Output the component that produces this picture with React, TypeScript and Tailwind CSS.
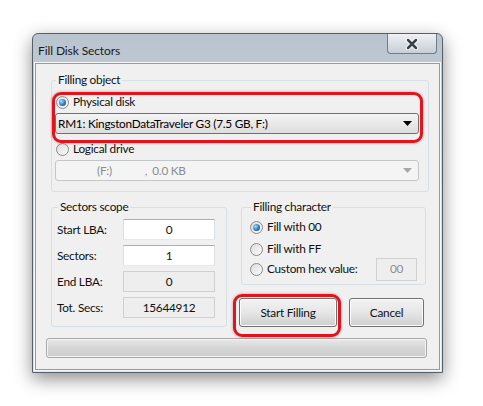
import React from 'react';

function Radio({ checked = false, disabled = false }: { checked?: boolean; disabled?: boolean }) {
  return (
    <span
      className={`flex h-[13px] w-[13px] shrink-0 items-center justify-center rounded-full border ${
        disabled ? 'border-[#b0b0b0]' : 'border-[#8a8a8a]'
      } bg-linear-to-br from-[#dcdcdc] to-[#fbfbfb]`}
    >
      {checked && (
        <span className="h-[7px] w-[7px] rounded-full bg-[radial-gradient(circle_at_35%_35%,#9ddcff,#1f69b5_65%,#164a86)]" />
      )}
    </span>
  );
}

function Combo({ children, disabled = false }: { children: React.ReactNode; disabled?: boolean }) {
  return (
    <div
      className={`flex h-[21px] items-center justify-between rounded-[3px] border pl-[2px] pr-[6px] ${
        disabled
          ? 'border-[#c3c7ca] bg-[#f4f4f4] text-[#8d8d8d]'
          : 'border-[#707070] bg-linear-to-b from-[#f4f4f4] to-[#dedede] text-black'
      }`}
    >
      <span className="flex whitespace-pre">{children}</span>
      <svg width="9" height="5" viewBox="0 0 9 5">
        <path d="M0 0 H9 L4.5 5 Z" fill={disabled ? '#a8a8a8' : '#000'} />
      </svg>
    </div>
  );
}

function Field({ label, value, disabled = false }: { label: string; value: string; disabled?: boolean }) {
  return (
    <div className="flex items-center">
      <span className="w-[66px]">{label}</span>
      <div
        className={`flex h-[21px] w-[92px] items-center justify-center border ${
          disabled ? 'border-[#d0d0d0] bg-[#eeeeee]' : 'border-[#abadb3] border-b-[#e3e9ef] border-x-[#dbdfe6] bg-white'
        }`}
      >
        {value}
      </div>
    </div>
  );
}

function Button({ label }: { label: string }) {
  return (
    <div className="flex h-[29px] items-center justify-center rounded-[3px] border border-[#707070] bg-linear-to-b from-[#f2f2f2] via-[#e6e6e6] to-[#cfcfcf] shadow-[inset_0_0_0_1px_#fcfcfc]">
      {label}
    </div>
  );
}

export default function App() {
  return (
    <div className="h-[406px] w-[483px] bg-white pl-[32px] pt-[33px] font-['Lato',sans-serif] text-[11.8px] leading-[16px] tracking-[-0.25px] text-[#111]">
      <div className="flex h-[340px] w-[411px] flex-col rounded-t-[6px] border border-[#56606b] bg-linear-to-b from-[#b9c4cf] via-[#d3dae2] to-[#dfe5eb] px-[2px] pb-[2px] shadow-[0_6px_18px_rgba(0,0,0,0.45)]">
        {/* Title bar */}
        <div className="flex h-[29px] items-start justify-between">
          <span className="mt-[9px] pl-[3px] text-[12px] tracking-[-0.1px] text-[#1a1a1a]">Fill Disk Sectors</span>
          <div className="mr-[3px] flex h-[20px] w-[50px] items-center justify-center rounded-b-[4px] border border-t-0 border-[#6f7b87] bg-linear-to-b from-[#eef1f4] to-[#c6ced7]">
            <svg width="16" height="12" viewBox="0 0 16 12">
              <path d="M4 2 L12 10 M12 2 L4 10" stroke="#fff" strokeWidth="4.5" strokeLinecap="round" />
              <path d="M4 2 L12 10 M12 2 L4 10" stroke="#38424d" strokeWidth="2.5" strokeLinecap="round" />
            </svg>
          </div>
        </div>

        {/* Client area */}
        <div className="relative flex flex-1 flex-col border border-[#8f9ba7] bg-[#f0f0f0] shadow-[0_0_0_1px_#f6f8fa]">
          <fieldset className="ml-[15px] mr-[10px] mt-[8px] rounded-[3px] border border-[#d5dfe5] px-[3px] pb-[10px]">
            <legend className="ml-[1px] px-[2px]">Filling object</legend>
            <div className="mt-[6px] flex h-[16px] items-center gap-[4px] pl-[1px]">
              <Radio checked />
              <span>Physical disk</span>
            </div>
            <div className="mr-[6px] mt-[3px]">
              <Combo>RM1: KingstonDataTraveler G3 (7.5 GB, F:)</Combo>
            </div>
            <div className="mt-[7px] flex h-[16px] items-center gap-[4px] pl-[1px]">
              <Radio />
              <span>Logical drive</span>
            </div>
            <div className="mr-[6px] mt-[3px]">
              <Combo disabled>
                <span className="ml-[39px]">(F:)</span>
                <span className="ml-[33px]">,</span>
                <span className="ml-[5px]">0.0 KB</span>
              </Combo>
            </div>
          </fieldset>

          <div className="mt-[7px] flex">
            <fieldset className="ml-[15px] h-[128px] w-[176px] rounded-[3px] border border-[#d5dfe5] pl-[5px]">
              <legend className="ml-[1px] px-[2px]">Sectors scope</legend>
              <div className="mt-[4px] flex flex-col gap-[5px]">
                <Field label="Start LBA:" value="0" />
                <Field label="Sectors:" value="1" />
                <Field label="End LBA:" value="0" disabled />
                <Field label="Tot. Secs:" value="15644912" disabled />
              </div>
            </fieldset>

            <div className="ml-[14px] flex w-[185px] flex-col">
              <fieldset className="h-[86px] rounded-[3px] border border-[#d5dfe5] pl-[8px] pr-[8px]">
                <legend className="ml-[1px] px-[2px]">Filling character</legend>
                <div className="mt-[4px] flex h-[16px] items-center gap-[4px]">
                  <Radio checked />
                  <span>Fill with 00</span>
                </div>
                <div className="mt-[6px] flex h-[16px] items-center gap-[4px]">
                  <Radio />
                  <span>Fill with FF</span>
                </div>
                <div className="mt-[4px] flex h-[16px] items-center gap-[4px]">
                  <Radio />
                  <span>Custom hex value:</span>
                  <div className="ml-auto flex h-[23px] w-[41px] items-center justify-center border border-[#d0d0d0] bg-[#eeeeee] text-[#8d8d8d]">
                    00
                  </div>
                </div>
              </fieldset>
              <div className="mt-[13px] flex gap-[12px]">
                <div className="ml-[-2px] w-[98px]">
                  <Button label="Start Filling" />
                </div>
                <div className="w-[75px]">
                  <Button label="Cancel" />
                </div>
              </div>
            </div>
          </div>

          <div className="ml-[10px] mt-[11px] h-[20px] w-[381px] rounded-[3px] border border-[#a8a8a8] bg-linear-to-b from-[#e8e8e8] via-[#d6d6d6] to-[#cdcdcd] shadow-[inset_0_0_0_1px_#f4f4f4]" />

          {/* Red highlight annotations */}
          <div className="pointer-events-none absolute left-[16px] top-[28px] h-[51px] w-[371px] rounded-[9px] border-[3px] border-[#e3121b] shadow-[0_0_3px_rgba(0,0,0,0.35)]" />
          <div className="pointer-events-none absolute left-[197px] top-[230px] h-[43px] w-[108px] rounded-[9px] border-[3px] border-[#e3121b] shadow-[0_0_3px_rgba(0,0,0,0.35)]" />
        </div>
      </div>
    </div>
  );
}
